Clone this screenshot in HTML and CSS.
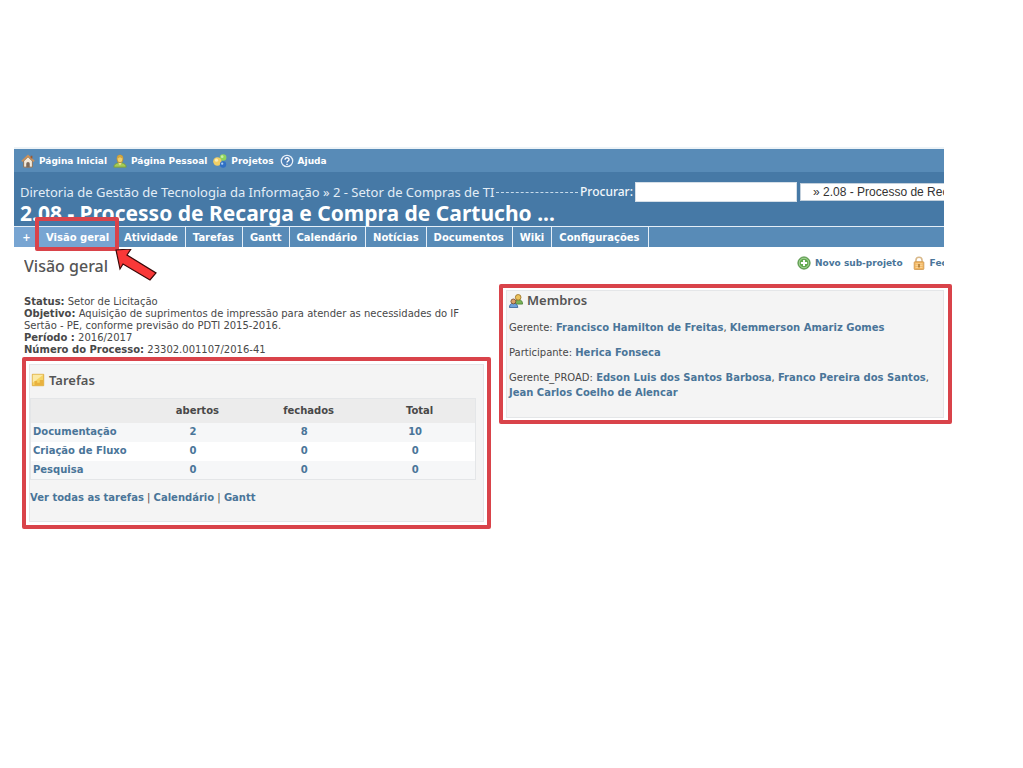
FILE: index.html
```html
<!DOCTYPE html>
<html lang="pt-BR">
<head>
<meta charset="utf-8">
<title>2.08 - Processo de Recarga e Compra de Cartucho</title>
<link rel="stylesheet" href="styles.css">
</head>
<body>
<div class="page">
  <nav class="top-menu" aria-label="Menu superior">
    <a href="#"><svg class="icon" viewBox="0 0 16 16"><path d="M3 8v7h10V8L8 3z" fill="#f3eadb" stroke="#8a6a4a"/><path d="M1 8.500 8 2l7 6.500" fill="none" stroke="#c9905a" stroke-width="2"/><path d="M11 2h2v3h-2z" fill="#9a5a35"/><path d="M6 15v-4a2 2 0 0 1 4 0v4z" fill="#7d6a5a"/></svg>Página Inicial</a>
    <a href="#"><svg class="icon" viewBox="0 0 16 16"><path d="M1 15c0-3 2-4 5-5h4c3 1 5 2 5 5z" fill="#a5cc55" stroke="#7d9a3a"/><path d="M6 10h4l-2 3z" fill="#f5e0a0"/><ellipse cx="8" cy="5.500" rx="3.500" ry="4.500" fill="#f1cf6a" stroke="#b58d35"/><path d="M4.500 5c0-5 7-5 7 0-2 0-3-1-3.500-2-.5 1-1.500 2-3.500 2z" fill="#d0a542"/></svg>Página Pessoal</a>
    <a href="#"><svg class="icon" viewBox="0 0 16 16"><circle cx="11.500" cy="4" r="3.800" fill="#8fd45c"/><circle cx="10.500" cy="3" r="1.500" fill="#c9f0a8"/><circle cx="5" cy="8.500" r="4.800" fill="#f2cf65"/><circle cx="4" cy="7" r="1.800" fill="#fdecb5"/><circle cx="11.500" cy="12" r="3.600" fill="#2f6fc5"/><circle cx="10.500" cy="11" r="1.300" fill="#a8cdf5"/></svg>Projetos</a>
    <a href="#"><svg class="icon" viewBox="0 0 16 16"><circle cx="8" cy="8" r="6.500" fill="#4f80b5" stroke="#e6eff8" stroke-width="1.500"/><path d="M5.800 6.500C5.800 3.500 10.500 3.800 10.300 6.500 10.200 8 8 8 8 9.800M8 11v1.700" fill="none" stroke="#fff" stroke-width="1.600"/></svg>Ajuda</a>
  </nav>
  <header class="header">
    <div class="header-row">
      <span class="crumbs">Diretoria de Gestão de Tecnologia da Informação » 2 - Setor de Compras de TI</span>
      <span class="dashes" aria-hidden="true"></span>
      <label for="q">Procurar:</label>
      <input id="q" class="search" type="text">
      <select class="jump" aria-label="Projeto"><option>» 2.08 - Processo de Recarga e Compra de Cartucho</option></select>
    </div>
    <h1>2.08 - Processo de Recarga e Compra de Cartucho ...</h1>
  </header>
  <nav class="tabs" aria-label="Projeto">
    <a class="plus" href="#">+</a>
    <a class="selected" href="#">Visão geral<span class="mark mark-tab"></span><svg class="arrow" viewBox="0 0 42 32"><path d="M1 1 16 0 12 6 41 24 35 31 8 15 5 20z" fill="#f93838" stroke="#3a0808" stroke-width="1.200"/></svg></a>
    <a href="#">Atividade</a>
    <a href="#">Tarefas</a>
    <a href="#">Gantt</a>
    <a href="#">Calendário</a>
    <a href="#">Notícias</a>
    <a href="#">Documentos</a>
    <a href="#">Wiki</a>
    <a href="#">Configurações</a>
  </nav>
  <main class="content">
    <div class="title-row">
      <h2>Visão geral</h2>
      <div class="actions">
        <a href="#"><svg class="icon" viewBox="0 0 16 16"><circle cx="8" cy="8" r="7" fill="#62a94f" stroke="#4b8a3e"/><circle cx="8" cy="8" r="5.500" fill="none" stroke="#b5dba8"/><path d="M8 4.500v7M4.500 8h7" stroke="#fff" stroke-width="2.200"/></svg>Novo sub-projeto</a>
        <a href="#"><svg class="icon" viewBox="0 0 16 16"><path d="M4.500 7V5a3.500 3.500 0 0 1 7 0v2" fill="none" stroke="#d9b98a" stroke-width="1.800"/><rect x="2.500" y="6.500" width="11" height="9" rx="1" fill="#f2b45c" stroke="#cf9a55"/><path d="M4 9h8M4 11h8M4 13h8" stroke="#fbdca6"/><path d="M8 9v4" stroke="#9a6a2a" stroke-width="1.500"/></svg>Fechar</a>
      </div>
    </div>
    <div class="columns">
      <section class="left">
        <ul class="info">
          <li><b>Status:</b> Setor de Licitação</li>
          <li><b>Objetivo:</b> Aquisição de suprimentos de impressão para atender as necessidades do IF Sertão - PE, conforme previsão do PDTI 2015-2016.</li>
          <li><b>Período :</b> 2016/2017</li>
          <li><b>Número do Processo:</b> 23302.001107/2016-41</li>
        </ul>
        <div class="box tasks">
          <h3><svg class="icon" viewBox="0 0 16 16"><path d="M1.500 1.500h13v13h-13z" fill="#f6d465" stroke="#dba83a"/><path d="M2 2h12L2 11z" fill="#fbe9a6"/><path d="M4 14V9h3v2h3V8h4v6z" fill="#e9b23f"/></svg>Tarefas</h3>
          <table>
            <thead><tr><th></th><th scope="col">abertos</th><th scope="col">fechados</th><th scope="col">Total</th></tr></thead>
            <tbody>
              <tr><td><a href="#">Documentação</a></td><td><a href="#">2</a></td><td><a href="#">8</a></td><td><a href="#">10</a></td></tr>
              <tr><td><a href="#">Criação de Fluxo</a></td><td><a href="#">0</a></td><td><a href="#">0</a></td><td><a href="#">0</a></td></tr>
              <tr><td><a href="#">Pesquisa</a></td><td><a href="#">0</a></td><td><a href="#">0</a></td><td><a href="#">0</a></td></tr>
            </tbody>
          </table>
          <p><a href="#">Ver todas as tarefas</a> | <a href="#">Calendário</a> | <a href="#">Gantt</a></p>
          <span class="mark"></span>
        </div>
      </section>
      <section class="right">
        <div class="box members">
          <h3><svg class="icon" viewBox="0 0 16 16"><path d="M7 11.500c0-3 1-5 4-5s4.500 2 4.500 5z" fill="#79b356" stroke="#4f8538"/><circle cx="10.500" cy="3.800" r="3.200" fill="#ecc25c" stroke="#9c7428"/><path d="M.5 15.500c0-3 1.500-5 4.500-5s5 2 5 5z" fill="#6fa3dc" stroke="#37659c"/><circle cx="5" cy="8.500" r="2.800" fill="#dba06a" stroke="#7c5030"/></svg>Membros</h3>
          <p>Gerente: <a href="#">Francisco Hamilton de Freitas</a>, <a href="#">Klemmerson Amariz Gomes</a></p>
          <p>Participante: <a href="#">Herica Fonseca</a></p>
          <p>Gerente_PROAD: <a href="#">Edson Luis dos Santos Barbosa</a>, <a href="#">Franco Pereira dos Santos</a>, <a href="#">Jean Carlos Coelho de Alencar</a></p>
          <span class="mark"></span>
        </div>
      </section>
    </div>
  </main>
</div>
</body>
</html>
```
FILE: styles.css
```css
* { box-sizing: border-box; }
body {
  margin: 0;
  background: #fff;
  color: #484848;
  font: 10px/12px "DejaVu Sans", Verdana, sans-serif;
}
a { color: #4a7599; font-weight: bold; text-decoration: none; }
h1, h2, h3, p, ul { margin: 0; padding: 0; }
h1, h2, h3 { font-family: "Noto Sans", "Trebuchet MS", sans-serif; }
.icon { width: 14px; height: 14px; flex: none; }
.page { margin: 147px 79px 40px 14px; border-top: 2px solid #edf3f7; }

.top-menu {
  display: flex;
  align-items: center;
  gap: 6px;
  height: 23px;
  padding: 0 7px;
  background: #588bb7;
}
.top-menu a { display: flex; align-items: center; gap: 4px; color: #fff; font-size: 9px; }

.header {
  height: 54px;
  padding: 10px 0 0 6px;
  overflow: hidden;
  background: #4679a6;
  color: #f2f7fb;
  white-space: nowrap;
}
.header-row { display: flex; align-items: center; height: 20px; font: 500 12px/20px "Noto Sans", sans-serif; }
.crumbs { flex: none; width: 476px; color: #e3edf6; font-size: 13px; font-weight: 400; }
.dashes { flex: none; width: 82px; margin-right: 2px; border-top: 1px dashed #c9dcec; }
.header-row label { flex: none; width: 55px; }
.search { flex: none; width: 162px; height: 20px; margin-right: 3px; border: 1px solid #d5dfe8; background: #fff; }
.jump {
  flex: none;
  width: 260px;
  height: 18px;
  padding: 0 12px;
  border: 1px solid #c3d0dc;
  border-radius: 0;
  appearance: none;
  background: #fff;
  color: #333;
  font: 12px/16px "Liberation Sans", Arial, sans-serif;
}
h1 { font-size: 21px; line-height: 22px; font-weight: 700; color: #fff; }

.tabs { display: flex; height: 21px; border-top: 1px solid #e4eef7; background: #588bb7; }
.tabs a {
  position: relative;
  padding: 0 7px;
  border-right: 1px solid #e4eef7;
  color: #fff;
  font-size: 10px;
  line-height: 22px;
}
.tabs .plus { width: 25px; text-align: center; border: 0; background: #78a5d2; }
.tabs .selected { padding-right: 8px; border: 0; background: #78a5d2; }
.tabs a:nth-child(even) { padding-right: 8px; }
.mark { position: absolute; inset: -8px; border: 4px solid #d9434a; border-radius: 2px; pointer-events: none; }
.tabs .mark-tab { inset: -10px -2px -4px -4px; }
.arrow { position: absolute; left: 76px; top: 22px; width: 42px; height: 32px; z-index: 1; }

.content { padding: 8px 0 0 10px; }
.title-row { display: flex; justify-content: space-between; overflow: hidden; }
h2 { font-size: 16px; line-height: 22px; font-weight: 500; color: #555; }
.actions { display: flex; align-items: center; gap: 9px; width: 147px; height: 16px; white-space: nowrap; }
.actions a { display: flex; align-items: center; gap: 4px; font-size: 9px; }
.columns { display: grid; grid-template-columns: 460px 1fr; gap: 22px; align-items: start; }
.info { list-style: none; padding-top: 19px; }
.box { position: relative; border: 1px solid #e4e6e8; background: #f4f4f4; }
.box h3 { display: flex; align-items: center; gap: 4px; font-size: 13px; line-height: 20px; font-weight: 600; color: #555; }
.tasks { margin: 8px 0 0 5px; padding: 5px 7px 17px 0; }
.tasks h3 { margin-bottom: 8px; padding-left: 1px; }
table { width: 100%; border: 1px solid #e4e6e8; border-collapse: collapse; table-layout: fixed; }
th { height: 24px; padding: 0; background: #ececec; font-size: 10px; }
td { height: 19px; padding: 0 9px 0 0; text-align: center; }
td:first-child { padding: 0 0 0 2px; text-align: left; }
tbody tr { background: #f6f7f8; }
tbody tr:nth-child(even) { background: #fff; }
.tasks p { margin-top: 12px; }
.members { margin-top: 13px; padding: 0 6px 17px 2px; }
.members h3 { line-height: 19px; }
.members p { margin-top: 10px; line-height: 15px; }
.members .mark { inset: -7px -9px -7px -8px; }
```
